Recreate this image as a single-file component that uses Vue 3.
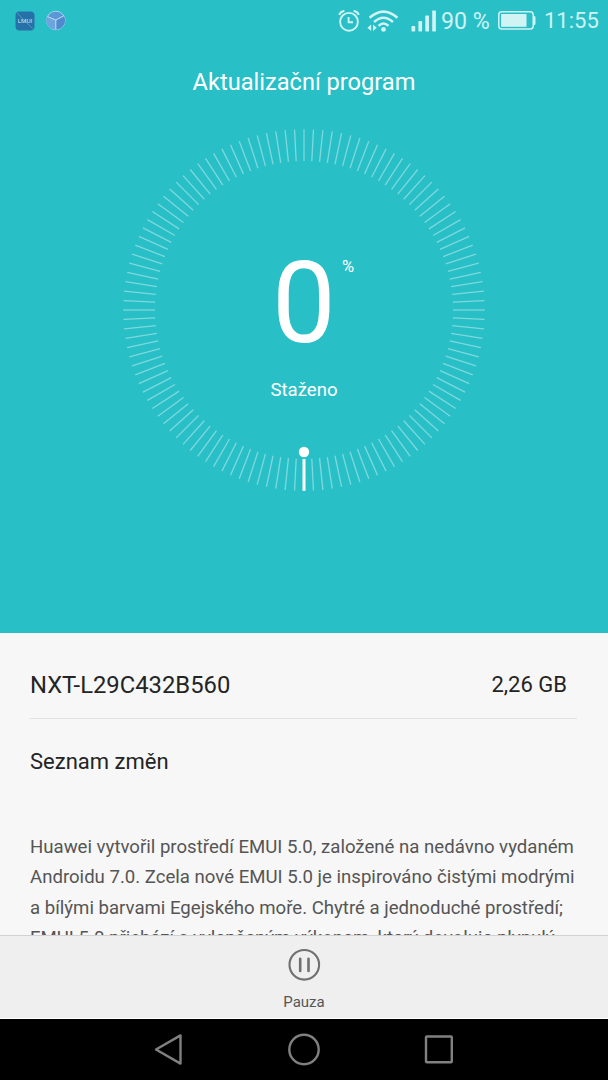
<template>
  <div class="screen">
    <section class="hero">
      <header class="status">
        <div class="notify">
          <svg width="20" height="20" viewBox="0 0 20 20">
            <rect x="0.5" y="0.5" width="19" height="19" rx="4" fill="#2672a8" />
            <path d="M2 2L18 18" stroke="#5c9dc5" stroke-width="0.8" />
            <text x="10" y="12.4" text-anchor="middle" font-size="6.2" fill="#c5e4ef">LMUI</text>
          </svg>
          <svg width="21" height="21" viewBox="0 0 21 21">
            <circle cx="10.8" cy="10.5" r="9.3" fill="#5b96d6" stroke="#a2d3ea" stroke-width="1" />
            <path d="M2.2 6.5L10.8 10V19.5A9 9 0 0 1 2.2 6.5Z" fill="#6da3df" />
            <path d="M10.8 10L18.8 6A9 9 0 0 1 10.8 19.5Z" fill="#4f8bcd" />
            <path d="M2.4 6.5L10.8 10L18.8 5.8M10.8 10V19.5" fill="none" stroke="#c1e2f4" stroke-width="1" />
          </svg>
        </div>
        <div class="system">
          <svg class="alarm" width="22" height="24" viewBox="0 0 22 24" fill="none" stroke="currentColor" stroke-width="1.9">
            <circle cx="11" cy="12.8" r="8.9" />
            <path d="M10.6 8V13.3H15" />
            <path d="M1.2 5.8Q2.5 2.6 6.4 1.8M20.8 5.8Q19.5 2.6 15.6 1.8" stroke-width="2.1" />
          </svg>
          <svg class="wifi" width="32" height="24" viewBox="0 0 32 24" fill="none" stroke="currentColor" stroke-width="2.5">
            <path d="M2.6 8.8Q16.5 -3.6 30.4 8.8" />
            <path d="M7 13Q16.5 4.4 26 13" />
            <path d="M11.5 16.8Q16.5 12.2 21.5 16.8" />
            <circle cx="16.5" cy="20.4" r="2.4" fill="currentColor" stroke="none" />
            <path d="M4.2 15.6V22L0.4 18.8ZM6 15.6V22L9.8 18.8Z" fill="currentColor" stroke="none" />
          </svg>
          <svg class="signal" width="26" height="22" viewBox="0 0 26 22" fill="currentColor">
            <rect x="0.5" y="16" width="3.7" height="5.5" rx="0.7" />
            <rect x="7.4" y="11" width="3.7" height="10.5" rx="0.7" />
            <rect x="14.3" y="5.5" width="3.7" height="16" rx="0.7" />
            <rect x="21.2" y="0.5" width="3.7" height="21" rx="0.7" />
          </svg>
          <span class="level">90 %</span>
          <svg class="battery" width="38" height="19" viewBox="0 0 38 19">
            <rect x="0.8" y="0.8" width="34.4" height="17.2" rx="3" fill="none" stroke="currentColor" stroke-width="1.5" />
            <rect x="3" y="3" width="25.5" height="12.8" fill="currentColor" />
            <path d="M35.5 5H36.5Q37.5 5 37.5 6.5V12.5Q37.5 14 36.5 14H35.5Z" fill="currentColor" />
          </svg>
          <span class="clock">11:55</span>
        </div>
      </header>

      <h1>Aktualizační program</h1>

      <div class="dial">
        <svg class="ring" width="364" height="364" viewBox="-182 -182 364 364">
          <line
            v-for="angle in ticks"
            :key="angle"
            y1="149"
            y2="180.8"
            :transform="`rotate(${angle})`"
          />
          <g :transform="`rotate(${progress * 3.6})`">
            <circle cy="142" r="5.2" fill="#fff" />
            <line class="hand" y1="149" y2="180.8" />
          </g>
        </svg>
        <div class="readout">
          <div class="number">{{ progress }}<span class="percent">%</span></div>
          <div class="label">Staženo</div>
        </div>
      </div>
    </section>

    <main class="details">
      <div class="version">
        <span>NXT-L29C432B560</span>
        <span class="size">2,26 GB</span>
      </div>
      <h2>Seznam změn</h2>
      <p class="changes">
        <span v-for="line in changes" :key="line">{{ line }}</span>
      </p>
    </main>

    <footer class="actions">
      <button class="pause">
        <svg width="34" height="34" viewBox="0 0 34 34" fill="none" stroke="#707070">
          <circle cx="17.3" cy="16.8" r="14.8" stroke-width="2.1" />
          <path d="M13.2 10.7V22.9M21.5 10.7V22.9" stroke-width="2.6" stroke-linecap="round" />
        </svg>
        <span>Pauza</span>
      </button>
    </footer>

    <nav class="keys">
      <svg width="30" height="36" viewBox="0 0 30 36">
        <path d="M26.5 3.4V31.6L2 17.5Z" />
      </svg>
      <svg width="34" height="36" viewBox="0 0 34 36">
        <circle cx="17" cy="17.5" r="14.7" />
      </svg>
      <svg width="30" height="36" viewBox="0 0 30 36">
        <rect x="2" y="4.5" width="25.8" height="25.8" rx="0.8" />
      </svg>
    </nav>
  </div>
</template>

<script setup>
import { computed, ref } from "vue";

const progress = ref(0);

// 120 ticks, one every 3 degrees; the one under the hand is left out
const ticks = computed(() =>
  Array.from({ length: 120 }, (_, i) => i * 3).filter(
    (angle) => angle !== Math.round(progress.value * 1.2) * 3
  )
);

const changes = [
  "Huawei vytvořil prostředí EMUI 5.0, založené na nedávno vydaném",
  "Androidu 7.0. Zcela nové EMUI 5.0 je inspirováno čistými modrými",
  "a bílými barvami Egejského moře. Chytré a jednoduché prostředí;",
  "EMUI 5.0 přichází s vylepšeným výkonem, který dovoluje plynulý",
];
</script>

<style>
body {
  margin: 0;
}
</style>

<style scoped>
.screen {
  display: flex;
  flex-direction: column;
  width: 608px;
  height: 1080px;
  overflow: hidden;
  font-family: Roboto, "Liberation Sans", sans-serif;
  background: #f7f7f7;
}
.hero {
  flex: none;
  height: 632.5px;
  color: #fff;
  background: #29bfc7;
}
.status {
  display: flex;
  justify-content: space-between;
  height: 41px;
  padding: 0 10px 0 15px;
  color: #d0f3f4;
}
.notify,
.system {
  display: flex;
  align-items: center;
}
.notify {
  gap: 10px;
}
.alarm {
  margin-right: 7px;
}
.wifi {
  margin-right: 12px;
}
.signal {
  margin-right: 4px;
}
.level,
.clock {
  line-height: 42px;
  white-space: nowrap;
}
.level {
  width: 50px;
  margin-right: 7px;
  font-size: 23.2px;
}
.battery {
  margin-right: 8px;
}
.clock {
  width: 54px;
  font-size: 22px;
}
h1 {
  margin: 0;
  font-size: 23.6px;
  font-weight: 400;
  line-height: 82px;
  text-align: center;
}
.dial {
  display: grid;
  justify-content: center;
  margin-top: 5px;
}
.ring,
.readout {
  grid-area: 1 / 1;
}
.ring {
  margin-top: -0.5px;
}
.ring line {
  stroke: rgba(255, 255, 255, 0.4);
  stroke-width: 1.3;
}
.ring .hand {
  stroke: #fff;
  stroke-width: 3;
}
.readout {
  padding-top: 116px;
  text-align: center;
}
.number {
  position: relative;
  font-size: 113.5px;
  line-height: 120px;
}
.percent {
  position: absolute;
  top: 13px;
  left: 220px;
  font-size: 16.5px;
  line-height: 20px;
}
.label {
  margin-top: 15px;
  font-size: 18.6px;
  line-height: 22px;
}
.details {
  flex: none;
  height: 302.5px;
  padding: 0 31px 0 30px;
  overflow: hidden;
  box-sizing: border-box;
  color: #242424;
}
.version {
  display: flex;
  justify-content: space-between;
  align-items: center;
  height: 86.5px;
  padding: 19px 10px 0 0;
  box-sizing: border-box;
  border-bottom: 1px solid #e1e1e1;
  font-size: 23.8px;
}
.size {
  font-size: 22px;
}
h2 {
  margin: 28px 0 55px;
  font-size: 22px;
  font-weight: 400;
  line-height: 30px;
}
.changes {
  margin: 0;
  font-size: 18.6px;
  line-height: 30.4px;
  color: #555;
}
.changes span {
  display: block;
  white-space: nowrap;
}
.actions {
  display: flex;
  justify-content: center;
  flex: none;
  height: 84px;
  box-sizing: border-box;
  border-top: 1px solid #d2d2d2;
  border-bottom: 1px solid #fff;
  background: #efefef;
}
.pause {
  display: flex;
  flex-direction: column;
  align-items: center;
  padding: 12px 0 0;
  border: 0;
  background: none;
  color: #555;
  font-family: inherit;
  font-size: 15px;
  line-height: 20px;
}
.pause span {
  margin-top: 10px;
}
.keys {
  display: flex;
  justify-content: center;
  align-items: center;
  gap: 103px;
  flex: 1;
  background: #000;
}
.keys svg {
  fill: none;
  stroke: #808080;
  stroke-width: 2.4;
  stroke-linejoin: round;
}
</style>
